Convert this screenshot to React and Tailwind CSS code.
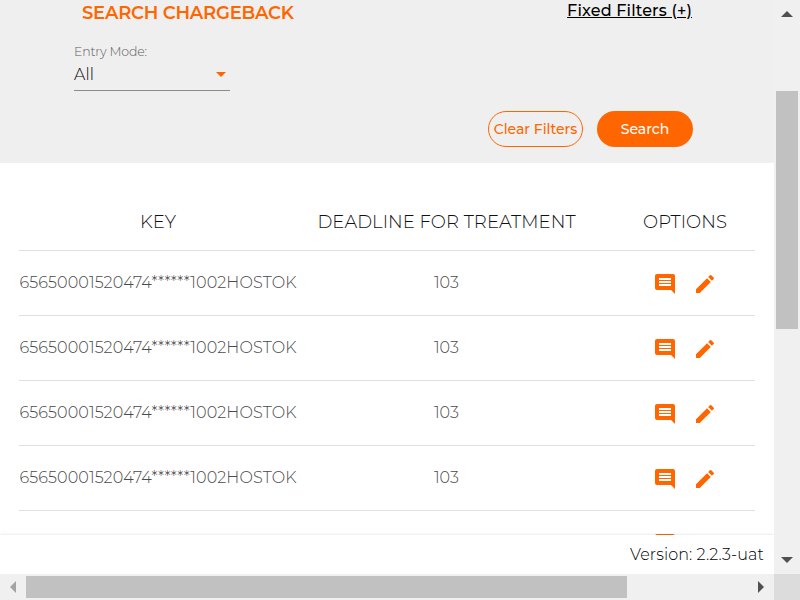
import React from "react";
import { MdComment, MdEdit, MdArrowDropDown } from "react-icons/md";

const rows = [1, 2, 3, 4].map((id) => ({ id, key: "65650001520474******1002HOSTOK", deadline: "103" })).concat({ id: 5, key: "", deadline: "" });

function SearchPanel() {
  return (
    <section className="h-[163px] shrink-0 bg-[#efefef]">
      <div className="flex h-[43px] justify-between pr-[82px] pl-[82px]">
        <h1 className="pt-px text-[18px] leading-6 font-semibold tracking-[-0.24px] text-[#ff6600]">SEARCH CHARGEBACK</h1>
        <a className="text-[16px] leading-[21px] font-medium tracking-[0.15px] text-black underline">Fixed Filters (+)</a>
      </div>
      <div className="ml-[74px] h-[48px] w-[156px] border-b border-[#8a8a8a]">
        <div className="h-[18px] text-[12.5px] leading-[17px] font-light tracking-[-0.14px] text-[#5c5c5c]">Entry Mode:</div>
        <div className="flex h-[27px] items-center justify-between">
          <span className="text-[16px] leading-6 font-light tracking-[0.2px] text-black">All</span>
          <MdArrowDropDown size={24} className="-mt-0.5 -mr-[3px] text-[#ff6600]" />
        </div>
      </div>
      <div className="mt-5 flex justify-end gap-[14px] pr-[81px] text-[14px] font-medium whitespace-nowrap">
        <button className="h-9 w-[95px] rounded-full border border-[#ff6600] text-[#ff6600]">Clear Filters</button>
        <button className="h-9 w-24 rounded-full bg-[#ff6600] text-white">Search</button>
      </div>
    </section>
  );
}

function Table() {
  return (
    <section className="mr-[19px] ml-[19px] pt-[30px] text-center whitespace-nowrap">
      <div className="grid h-[58px] grid-cols-[278px_298px_160px] border-b border-[#e0e0e0] pt-4 text-[18px] leading-[26px] font-light tracking-[0.06px] text-[#111111]">
        <span>KEY</span>
        <span className="pl-px">DEADLINE FOR TREATMENT</span>
        <span className="pl-5">OPTIONS</span>
      </div>
      {rows.map((row) => (
        <div key={row.id} className="grid h-[65px] grid-cols-[278px_298px_160px] items-center border-b border-[#e0e0e0] text-[16px] font-light tracking-[0.1px] text-[#4a4a4a]">
          <span>{row.key}</span>
          <span className="pl-px">{row.deadline}</span>
          <span className="flex justify-center gap-4 pt-0.5 pl-5 text-[#ff6600]">
            <MdComment size={24} />
            <MdEdit size={24} />
          </span>
        </div>
      ))}
    </section>
  );
}

export default function App() {
  return (
    <div className="grid h-[600px] w-[800px] grid-cols-[774px_26px] grid-rows-[574px_26px] overflow-hidden bg-white font-['Montserrat','Inter',sans-serif]">
      <main className="flex flex-col overflow-hidden">
        <SearchPanel />
        <div className="h-[372px] shrink-0 overflow-hidden">
          <Table />
        </div>
        <footer className="z-10 h-[39px] shrink-0 bg-white pr-[10px] text-right text-[16px] leading-[39px] font-light tracking-[0.1px] text-black shadow-[0_0_3px_rgba(0,0,0,0.15)]">
          Version: 2.2.3-uat
        </footer>
      </main>
      <div className="flex flex-col items-center bg-[#f0f0f0]">
        <svg className="h-[91px] w-[26px] shrink-0" viewBox="0 0 26 91"><path d="M7 17L13 11L19 17Z" fill="#505050" /></svg>
        <div className="h-[238px] w-[22px] shrink-0 bg-[#c1c1c1]" />
        <svg className="mt-auto h-[26px] w-[26px] shrink-0" viewBox="0 0 26 26"><path d="M7 9L13 15L19 9Z" fill="#505050" /></svg>
      </div>
      <div className="flex items-center bg-[#f0f0f0]">
        <svg className="h-[26px] w-[26px] shrink-0" viewBox="0 0 26 26"><path d="M16 7L10 13L16 19Z" fill="#a3a3a3" /></svg>
        <div className="h-[22px] w-[601px] bg-[#c1c1c1]" />
        <svg className="ml-auto h-[26px] w-[26px] shrink-0" viewBox="0 0 26 26"><path d="M10 7L16 13L10 19Z" fill="#505050" /></svg>
      </div>
      <div className="bg-[#dcdcdc]" />
    </div>
  );
}
